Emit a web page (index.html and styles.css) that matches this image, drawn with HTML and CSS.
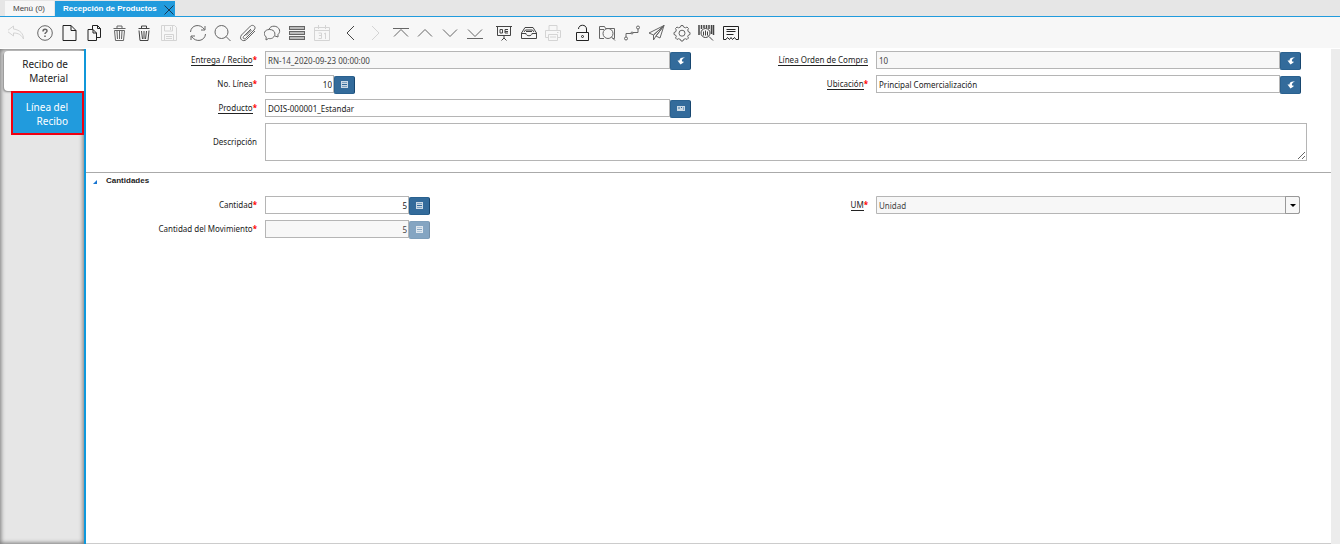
FILE: index.html
```html
<!DOCTYPE html>
<html lang="es">
<head>
    <meta charset="UTF-8">
    <title>Recepción de Productos</title>
    <link rel="stylesheet" href="styles.css">
</head>
<body>
<svg class="symbols" aria-hidden="true">
    <symbol id="zoomTo" viewBox="0 0 8 8"><path d="M8 .5C4.500 0 2.500 1 2.500 3.500H.5L3.500 7.500 6.500 5.500V4.500H5C4.500 2.500 5.500 1.500 8 .5z"/></symbol>
    <symbol id="calc" viewBox="0 0 8 8"><path fill-rule="evenodd" d="M0 0h7v7H0zM1 1v1h5V1zM1 3v1h5V3zM1 5v1h5V5z"/><path opacity=".5" d="M1 1h5v1H1zM1 5h5v1H1z"/></symbol>
    <symbol id="product" viewBox="0 0 8 8"><path opacity=".75" fill-rule="evenodd" d="M0 1h8v5H0zM1 2v2h2V2zM4 2v1h1V2zM6 2v3h1V2z"/><path opacity=".4" d="M1 2h2v2H1zM6 2h1v3H6z"/></symbol>
</svg>
<div class="tabs">
    <button class="tab">Menú (0)</button>
    <div class="tab active">
        <span>Recepción de Productos</span>
        <button class="close" aria-label="Cerrar"><svg viewBox="0 0 10 10"><path d="M.5.5l9 9M9.500.5l-9 9"/></svg></button>
    </div>
</div>
<div class="toolbar">
    <div class="group">
        <button aria-label="Deshacer" disabled><svg viewBox="0 0 18 18"><path d="M5.500 2L-1 7l6.500 5V9c5 0 8 2 10 6 0-5-3-9-10-10z"/></svg></button>
    </div>
    <div class="group">
        <button aria-label="Ayuda"><svg viewBox="0 0 18 18"><circle cx="9" cy="9" r="7.300"/><path stroke-width="1.500" d="M7 7.500c0-3 4-3 4-.5 0 1.500-2 1.500-2 3M9 11.500v1.500"/></svg></button>
        <button aria-label="Nuevo"><svg class="dark" viewBox="0 0 18 18"><path d="M2 1.500h8l5 5v10H2zM10 1.500v5h5"/></svg></button>
        <button aria-label="Copiar"><svg class="dark" viewBox="0 0 18 18"><path d="M6.500 5V1.500h5l3 3v9h-4M11.500 1.500v3h3M2 5.500h5l3.500 3.500v7.500H2zM7 5.500V9h3.500"/></svg></button>
        <button aria-label="Eliminar"><svg viewBox="0 0 18 18"><path d="M2.500 4.500h12M6 4V2h5v2M3.500 6.500l1 10h8l1-10zM6 7l.5 8M8.500 7v8M11 7l-.5 8"/></svg></button>
        <button aria-label="Eliminar selección"><svg class="mid" viewBox="0 0 18 18"><path d="M2.500 4.500h11M5.500 4V2h5v2M3 6.500l1 10h8l1-10M5.500 7l1 8M8 7v8M10.500 7l-1 8"/></svg></button>
        <button aria-label="Guardar" disabled><svg viewBox="0 0 18 18"><path d="M.5 1.500h13l2 2v13H.5zM3.500 2v5h8V2M9.500 3v3M3.500 16v-5.500h9V16M5 12.500h6M5 14.500h6"/></svg></button>
    </div>
    <div class="group">
        <button aria-label="Refrescar"><svg viewBox="0 0 18 18"><path d="M1.500 8C2 1 11-1 15.500 5.500M16 2v4h-4M16.500 10c-.5 7-9.500 9-14 2.500M2 16v-4h4"/></svg></button>
        <button aria-label="Buscar"><svg viewBox="0 0 18 18"><circle cx="7.500" cy="8" r="6.500"/><path d="M12 12.500l4.500 4.500"/></svg></button>
        <button aria-label="Adjuntos"><svg viewBox="0 0 18 18"><path d="M12 5l-7.500 7.500c-1 1.500.5 3 2 2L15 6c3-3-1-6-3.500-4L2.500 11c-3 4 1.500 7.500 5 4.500l8.500-8.500M12.500 6l-5.500 5.500"/></svg></button>
        <button aria-label="Chat"><svg viewBox="0 0 18 18"><path d="M5 5.500C6 1 14 1 15.500 6c.5 2-.5 3.500-1.500 4.500v2.500l-3-1M5.500 5.500c6 0 7 6 3 8.500-1.500.8-3 .7-4 .5L2 16l.2-3C-1.500 10 .5 5.500 5.500 5.500z"/></svg></button>
        <button aria-label="Rejilla"><svg viewBox="0 0 18 18"><g fill="#bbb"><rect x=".5" y="2.500" width="15" height="3"/><rect x=".5" y="7.500" width="15" height="3"/><rect x=".5" y="12.500" width="15" height="3"/></g></svg></button>
        <button aria-label="Calendario" disabled><svg viewBox="0 0 18 18"><path d="M.5 3.500h15v13H.5zM.5 6.500h15M4.500 1v4M11.500 1v4"/><path d="M4.500 9h3v5.500h-3M5 11.500h2.500M10 10l1.500-1v6"/></svg></button>
    </div>
    <div class="group">
        <button aria-label="Anterior"><svg class="mid" viewBox="0 0 18 18"><path d="M12 2L5 9l7 7"/></svg></button>
        <button aria-label="Siguiente" disabled><svg viewBox="0 0 18 18"><path d="M5 2l7 7-7 7"/></svg></button>
        <button aria-label="Primer registro"><svg viewBox="0 0 18 18"><path d="M1 4.500h16M2 12.500l7-7 7 7"/></svg></button>
        <button aria-label="Registro anterior"><svg viewBox="0 0 18 18"><path d="M1 12.500l7-7 7 7"/></svg></button>
        <button aria-label="Registro siguiente"><svg viewBox="0 0 18 18"><path d="M1 5.500l7 7 7-7"/></svg></button>
        <button aria-label="Último registro"><svg viewBox="0 0 18 18"><path d="M1 5.500l7 7 7-7M0 14.500h16"/></svg></button>
    </div>
    <div class="group">
        <button aria-label="Informe"><svg class="mid" viewBox="0 0 18 18"><path d="M1 2.500h16M2.500 3v8.500h13V3M9 12v3M6.500 16.500L9 14l2.500 2.500M5 5.500h2.500v3.500H5zM13 5.500h-3v3.500h3M10 7.500h3"/></svg></button>
        <button aria-label="Archivo"><svg class="mid" viewBox="0 0 18 18"><path d="M1.500 9L5 3.500h8L16.500 9v5.500h-15zM1.500 9.500H6c0 3 6 3 6 0h4.500M4 8l1.500-2h7L14 8M6 7.500h6"/></svg></button>
        <button aria-label="Imprimir" disabled><svg viewBox="0 0 18 18"><path d="M4 6.500v-5h8v5M3.500 13.500h-3v-7h15v7h-3M3.500 10.500h9v6h-9zM5 13h6M12 8.500h1.500"/></svg></button>
    </div>
    <div class="group">
        <button aria-label="Bloquear"><svg class="dark" viewBox="0 0 18 18"><path d="M3.500 8.500h12v8h-12zM5.500 5C5.500 0 13.500 0 13.500 5v3"/><circle cx="9.500" cy="12.500" r="1"/></svg></button>
        <button aria-label="Zoom"><svg viewBox="0 0 18 18"><path d="M6 14.500H1.500v-12h5l1 2h9v10h-2M1.500 5.500H6"/><circle cx="10" cy="9.500" r="5"/><path d="M13.500 13l3.500 3.500"/></svg></button>
        <button aria-label="Flujo de trabajo"><svg viewBox="0 0 18 18"><circle cx="3" cy="14.500" r="1.500"/><circle cx="15" cy="3.500" r="1.500"/><path d="M3 13v-3.500h5M15 5v3.500h-5"/><circle cx="9" cy="9" r="1"/></svg></button>
        <button aria-label="Solicitud"><svg viewBox="0 0 18 18"><path d="M16 1.500L1 9l4.500 2zM16 1.500L12 14l-4-2zM5.500 11v5L8 12M5.500 11L16 1.500 8 12"/></svg></button>
        <button aria-label="Proceso"><svg viewBox="0 0 18 18"><path d="M7.500 3l.5-1.500h2l.5 1.500 2 .8L14 3l1.500 1.500-.8 1.500.8 2 1.500.5v2l-1.500.5-.8 1.500.8 1.500L14 15.500l-1.500-.8-2 .8L10 17H8l-.5-1.500-2-.8-1.500.8L2.500 14l.8-1.500-.8-1.500L1 10.500v-2L2.500 8l.8-2-.8-1.500L4 3l1.500.8z"/><circle cx="9" cy="9.200" r="3"/></svg></button>
        <button aria-label="Info producto"><svg class="mid" viewBox="0 0 18 18"><path stroke-width="1.500" d="M1 1v10M3.500 1v4M6 1v3M8.500 1v3M11 1v4M13.500 1v9M15.500 1v10"/><circle cx="7.500" cy="9" r="4.500"/><path d="M11 12.500l4 4M5.500 7.500v4M7.500 6.500v5M9.500 7.500v4"/></svg></button>
        <button aria-label="Comprobante"><svg class="dark" viewBox="0 0 18 18"><path d="M3 15.500H.5v-13h15v13H13M3.500 5.500h9M3.500 7.500h9M3.500 10.500h7M3 15.500l1.500-2 2 2 1.500-2 1.500 2 2-2 1.500 2"/></svg></button>
    </div>
</div>
<div class="content">
    <div class="sidebar">
        <button class="sideTab">Recibo de Material</button>
        <button class="sideTab selected">Línea del Recibo</button>
    </div>
    <form class="panel">
        <div class="fields">
            <label for="recibo"><a href="#">Entrega / Recibo</a><b>*</b></label>
            <div class="field"><input id="recibo" type="text" value="RN-14_2020-09-23 00:00:00" readonly><button type="button" class="btn" aria-label="Ver recibo"><svg><use href="#zoomTo"/></svg></button></div>
            <label for="orden"><a href="#">Línea Orden de Compra</a></label>
            <div class="field"><input id="orden" type="text" value="10" readonly><button type="button" class="btn" aria-label="Ver orden"><svg><use href="#zoomTo"/></svg></button></div>

            <label for="linea">No. Línea<b>*</b></label>
            <div class="field short"><input id="linea" type="text" value="10"><button type="button" class="btn" aria-label="Calculadora"><svg><use href="#calc"/></svg></button></div>
            <label for="ubicacion"><a href="#">Ubicación</a><b>*</b></label>
            <div class="field"><input id="ubicacion" type="text" value="Principal Comercialización"><button type="button" class="btn" aria-label="Ver ubicación"><svg><use href="#zoomTo"/></svg></button></div>

            <label for="producto"><a href="#">Producto</a><b>*</b></label>
            <div class="field"><input id="producto" type="text" value="DOIS-000001_Estandar"><button type="button" class="btn" aria-label="Buscar producto"><svg><use href="#product"/></svg></button></div>

            <label class="first" for="descripcion">Descripción</label>
            <div class="field wide"><textarea id="descripcion"></textarea></div>
        </div>
        <h2><span class="arrow"></span>Cantidades</h2>
        <div class="fields">
            <label for="cantidad">Cantidad<b>*</b></label>
            <div class="field number"><input id="cantidad" type="text" value="5"><button type="button" class="btn" aria-label="Calculadora"><svg><use href="#calc"/></svg></button></div>
            <label for="um"><a href="#">UM</a><b>*</b></label>
            <div class="field combo"><select id="um" disabled><option>Unidad</option></select></div>

            <label for="movimiento">Cantidad del Movimiento<b>*</b></label>
            <div class="field number"><input id="movimiento" type="text" value="5" readonly><button type="button" class="btn" aria-label="Calculadora" disabled><svg><use href="#calc"/></svg></button></div>
        </div>
    </form>
    <div class="east"></div>
</div>
</body>
</html>
```
FILE: styles.css
```css
*{
    box-sizing: border-box;
    margin: 0;
    padding: 0;
}
body{
    display: flex;
    flex-direction: column;
    height: 100vh;
    overflow: hidden;
    font-family: "Noto Sans", sans-serif;
    font-size: 8px;
    color: #222;
    background: #fff;
}
button,input,select,textarea{
    font: inherit;
    color: inherit;
    border: 0;
}
.symbols{
    position: absolute;
    width: 0;
    height: 0;
}

/* window tabs */
.tabs{
    display: flex;
    gap: 1px;
    height: 17px;
    padding: 1px 5px 0;
    background: #e6e6e6;
    border-bottom: 1px solid #219bdd;
    font-family: "Liberation Sans", sans-serif;
}
.tab{
    display: flex;
    align-items: center;
    padding: 0 9px 0 8px;
    background: #f7f7f7;
    color: #444;
}
.tab.active{
    gap: 7px;
    padding-right: 1px;
    background: #219bdd;
    color: #fff;
    font-weight: bold;
}
.close{
    width: 10px;
    height: 10px;
    margin-top: 2px;
    background: none;
}
.close svg{
    display: block;
    stroke: #1a3a55;
}

/* toolbar */
.toolbar{
    display: flex;
    gap: 3px;
    height: 31px;
    padding: 0 4px;
    background: #f7f7f7;
}
.group{
    display: flex;
}
.toolbar button{
    display: flex;
    align-items: center;
    justify-content: center;
    width: 25px;
    background: none;
}
.toolbar svg{
    width: 18px;
    height: 18px;
    fill: none;
    stroke: #666;
}
.toolbar .mid{
    stroke: #444;
}
.toolbar .dark{
    stroke: #222;
}
.toolbar button:disabled svg{
    stroke: #d4d4d4;
}

.content{
    display: flex;
    flex: 1;
    min-height: 0;
    padding-top: 1px;
}
.sidebar{
    width: 86px;
    padding: 2px 0 0 4px;
    background: #e6e6e6;
    border-right: 2px solid #0d98dc;
    box-shadow: inset 0 0 4px 1px #777;
}
.sideTab{
    display: block;
    width: 80px;
    height: 40px;
    padding: 0 16px 0 8px;
    background: #fff;
    border-radius: 4px 0 0 4px;
    box-shadow: -1px 1px 2px #888;
    color: #222;
    font-size: 10px;
    line-height: 14px;
    text-align: right;
}
.sideTab.selected{
    width: 73px;
    height: 44px;
    margin-left: 7px;
    padding: 2px 14px 0 8px;
    background: #219bdd;
    border: 2px solid #f00010;
    border-radius: 0;
    box-shadow: none;
    color: #fff;
}

/* form */
.panel{
    flex: 1;
    border-bottom: 1px solid #ccc;
}
.east{
    width: 9px;
    background: #ececec;
}
.fields{
    display: grid;
    grid-template-columns: 171fr 426fr 169fr 425fr;
    gap: 6px 8px;
    align-items: center;
    padding: 2px 30px 0 0;
}
.fields label{
    text-align: right;
    line-height: 18px;
}
.fields a{
    color: inherit;
    text-decoration: none;
    border-bottom: 1px solid #222;
}
.fields b{
    color: #f00;
}
.first{
    grid-column: 1;
}
.field{
    display: flex;
    min-width: 0;
}
.field input,.field select,.field textarea{
    flex: 1;
    min-width: 0;
    height: 18px;
    padding: 0 2px;
    background: #fff;
    border: 1px solid #b5b5b5;
}
.field input[readonly],.field select{
    background: #f7f7f7;
    color: #444;
}
.field.wide{
    grid-column: 2 / 5;
    margin-right: -6px;
}
.field textarea{
    height: 38px;
}
.short{
    width: 90px;
}
.number{
    width: 165px;
}
.short input,.number input{
    padding-right: 1px;
    text-align: right;
}
.btn{
    display: flex;
    align-items: center;
    justify-content: center;
    width: 21px;
    height: 18px;
    margin: 1px 0 -1px;
    background: #336b9b;
    border: 1px solid #2a618f;
    border-right-color: #17466f;
    border-radius: 2px;
}
.btn svg{
    width: 8px;
    height: 8px;
    fill: #fff;
}
.number svg,.short svg{
    opacity: .75;
}
.btn:disabled{
    opacity: .6;
}
.field select{
    appearance: none;
    opacity: 1;
    border-radius: 0 2px 2px 0;
}
.combo{
    position: relative;
    margin-right: 1px;
}
.combo::before{
    content: "";
    position: absolute;
    top: 0;
    right: 0;
    bottom: 0;
    width: 13px;
    border: 1px solid #999;
    border-radius: 0 2px 2px 0;
}
.combo::after{
    content: "";
    position: absolute;
    top: 8px;
    right: 4px;
    border: 3px solid transparent;
    border-top-color: #000;
    border-bottom: 0;
}
h2{
    display: flex;
    align-items: center;
    gap: 9px;
    height: 22px;
    margin-top: 11px;
    padding: 0 7px 7px;
    border-top: 1px solid #aaa;
    font-family: "Liberation Sans", sans-serif;
    font-size: 8px;
}
.arrow{
    margin-top: 4px;
    border-left: 4px solid transparent;
    border-bottom: 4px solid #1976d2;
}
```
